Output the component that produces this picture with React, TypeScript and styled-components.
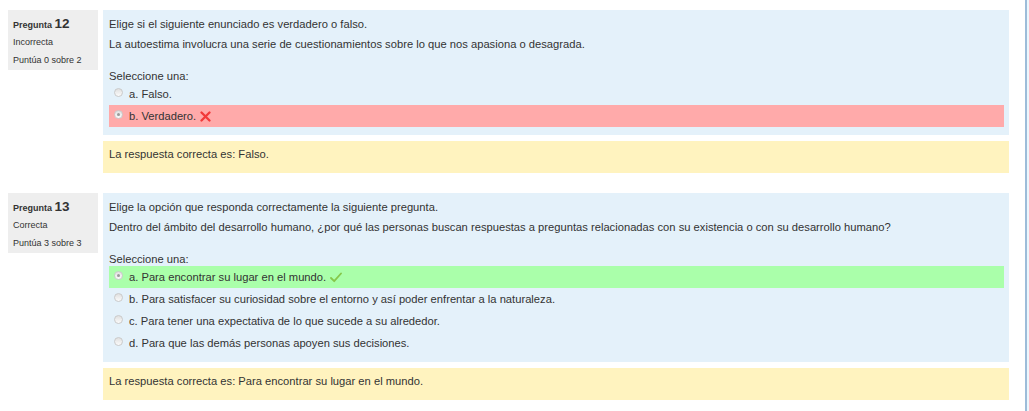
import styled, { createGlobalStyle } from "styled-components";

const GlobalStyle = createGlobalStyle`
  html, body {
    margin: 0;
    padding: 0;
    height: 100%;
    background: #fff;
  }
  #root {
    height: 100%;
  }
  body {
    font-family: "Liberation Sans", Arial, sans-serif;
    font-size: 11.2px;
    color: #333;
  }
`;

type OptionState = "correct" | "incorrect" | undefined;

interface IOption {
  text: string;
  checked?: boolean;
  state?: OptionState;
}

interface IQuestion {
  no: number;
  state: string;
  grade: string;
  intro: string;
  text: string;
  options: IOption[];
  answer: string;
}

const questions: IQuestion[] = [
  {
    no: 12,
    state: "Incorrecta",
    grade: "Puntúa 0 sobre 2",
    intro: "Elige si el siguiente enunciado es verdadero o falso.",
    text: "La autoestima involucra una serie de cuestionamientos sobre lo que nos apasiona o desagrada.",
    options: [
      { text: "a. Falso." },
      { text: "b. Verdadero.", checked: true, state: "incorrect" },
    ],
    answer: "La respuesta correcta es: Falso.",
  },
  {
    no: 13,
    state: "Correcta",
    grade: "Puntúa 3 sobre 3",
    intro: "Elige la opción que responda correctamente la siguiente pregunta.",
    text: "Dentro del ámbito del desarrollo humano, ¿por qué las personas buscan respuestas a preguntas relacionadas con su existencia o con su desarrollo humano?",
    options: [
      { text: "a. Para encontrar su lugar en el mundo.", checked: true, state: "correct" },
      { text: "b. Para satisfacer su curiosidad sobre el entorno y así poder enfrentar a la naturaleza." },
      { text: "c. Para tener una expectativa de lo que sucede a su alrededor." },
      { text: "d. Para que las demás personas apoyen sus decisiones." },
    ],
    answer: "La respuesta correcta es: Para encontrar su lugar en el mundo.",
  },
];

const Page = styled.div`
  display: flex;
  min-height: 100%;
`;

const Main = styled.main`
  flex: 1;
  padding: 10px 16px 0 8px;
`;

const Edge = styled.div`
  width: 2px;
  flex-shrink: 0;
  border-left: 2px solid #9dbcd9;
  background: #eef6fc;
`;

const QuestionBlock = styled.section`
  display: flex;
  gap: 5px;
  margin-bottom: 20px;
`;

const Info = styled.div`
  width: 90px;
  height: 60px;
  flex-shrink: 0;
  box-sizing: border-box;
  padding: 5px;
  background: #eee;
  font-size: 9px;
`;

const InfoTitle = styled.h3`
  margin: 0;
  font-size: 9px;
  font-weight: bold;
  line-height: 17px;
`;

const QNo = styled.span`
  font-size: 13.5px;
`;

const InfoLine = styled.div<{ $gap?: number }>`
  line-height: 17px;
  margin-top: ${({ $gap }) => $gap ?? 0}px;
`;

const Body = styled.div`
  flex: 1;
  display: flex;
  flex-direction: column;
  gap: 6px;
`;

const Formulation = styled.div`
  background: #e4f1fa;
  padding: 4px 5px 8px 6px;
`;

const QText = styled.p`
  margin: 0;
  line-height: 20px;
`;

const Prompt = styled.div`
  margin-top: 15px;
  line-height: 14px;
`;

const OptionRow = styled.div<{ $state?: OptionState }>`
  display: flex;
  align-items: center;
  height: 22px;
  box-sizing: border-box;
  padding: 1px 5px 0;
  line-height: 21px;
  background: ${({ $state }) =>
    $state === "correct" ? "#aaffaa" : $state === "incorrect" ? "#ffaaaa" : "transparent"};
`;

const Radio = styled.span<{ $checked?: boolean }>`
  position: relative;
  align-self: flex-start;
  width: 9px;
  height: 9px;
  flex-shrink: 0;
  box-sizing: border-box;
  margin: 4px 6px 0 0;
  border-radius: 50%;
  border: 1px solid #cacaca;
  background: linear-gradient(180deg, #e0e0e0, #fbfbfb);

  ${({ $checked }) =>
    $checked &&
    `
    &::after {
      content: "";
      position: absolute;
      left: 2px;
      top: 2px;
      width: 3px;
      height: 3px;
      border-radius: 50%;
      background: #9a9a9a;
    }
  `}
`;

const Mark = styled.svg`
  margin-left: 4px;
  flex-shrink: 0;
`;

const Outcome = styled.div`
  background: #fff3bf;
  padding: 3px 6px 9px;
  line-height: 20px;
`;

function CrossIcon() {
  return (
    <Mark width="11" height="11" viewBox="0 0 11 11">
      <path d="M1.5 1.5 L9.5 9.5 M9.5 1.5 L1.5 9.5" stroke="#f23a3a" strokeWidth="2.3" strokeLinecap="round" fill="none" />
    </Mark>
  );
}

function CheckIcon() {
  return (
    <Mark width="12" height="11" viewBox="0 0 12 11">
      <path d="M1 6 L4.2 9.2 L11 1.5" stroke="#86c74a" strokeWidth="1.8" strokeLinecap="round" strokeLinejoin="round" fill="none" />
    </Mark>
  );
}

function Question({ q }: { q: IQuestion }) {
  return (
    <QuestionBlock>
      <Info>
        <InfoTitle>
          Pregunta <QNo>{q.no}</QNo>
        </InfoTitle>
        <InfoLine>{q.state}</InfoLine>
        <InfoLine $gap={1}>{q.grade}</InfoLine>
      </Info>
      <Body>
        <Formulation>
          <QText>{q.intro}</QText>
          <QText>{q.text}</QText>
          <Prompt>Seleccione una:</Prompt>
          {q.options.map((o) => (
            <OptionRow key={o.text} $state={o.state}>
              <Radio $checked={o.checked} />
              {o.text}
              {o.state === "incorrect" && <CrossIcon />}
              {o.state === "correct" && <CheckIcon />}
            </OptionRow>
          ))}
        </Formulation>
        <Outcome>{q.answer}</Outcome>
      </Body>
    </QuestionBlock>
  );
}

export default function App() {
  return (
    <>
      <GlobalStyle />
      <Page>
        <Main>
          {questions.map((q) => (
            <Question key={q.no} q={q} />
          ))}
        </Main>
        <Edge />
      </Page>
    </>
  );
}
